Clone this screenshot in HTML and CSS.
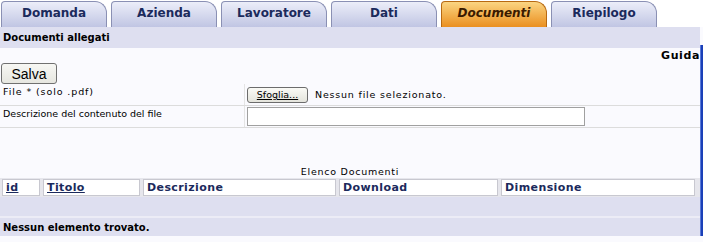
FILE: index.html
```html
<!DOCTYPE html>
<html>
<head>
    <title>Documenti</title>
    <link rel="stylesheet" href="styles.css">
</head>
<body>
<div class="tabs">
    <a class="tab">Domanda</a>
    <a class="tab">Azienda</a>
    <a class="tab">Lavoratore</a>
    <a class="tab">Dati</a>
    <a class="tab tab-active">Documenti</a>
    <a class="tab">Riepilogo</a>
</div>

<div class="page">
    <div class="content">
        <div class="section-title">Documenti allegati</div>

        <div class="guida">Guida</div>

        <button class="btn-salva">Salva</button>

        <div class="form-row">
            <div class="form-label label-file">File * (solo .pdf)</div>
            <div class="form-field">
                <button class="btn-file">Sfoglia...</button>
                <span class="file-name">Nessun file selezionato.</span>
            </div>
        </div>
        <div class="form-row">
            <div class="form-label">Descrizione del contenuto del file</div>
            <div class="form-field">
                <input class="text-input" type="text">
            </div>
        </div>

        <div class="list-caption">Elenco Documenti</div>
        <div class="list-head">
            <div class="head-cell"><a href="#">id</a></div>
            <div class="head-cell"><a href="#">Titolo</a></div>
            <div class="head-cell">Descrizione</div>
            <div class="head-cell">Download</div>
            <div class="head-cell">Dimensione</div>
        </div>
        <div class="list-row row-empty"></div>
        <div class="list-row row-msg">Nessun elemento trovato.</div>
    </div>
    <div class="side-bar"></div>
</div>
</body>
</html>
```

FILE: styles.css
```css
body {
    margin: 0;
    background-color: #fafafe;
    font-family: "DejaVu Sans", Verdana, sans-serif;
    font-size: 10px;
    color: #000000;
}

/* linguette */
.tabs {
    display: flex;
    gap: 4px;
    padding: 1px 0 0 1px;
    height: 27px;
    box-sizing: border-box;
    background-color: #ffffff;
}

.tab {
    width: 106px;
    box-sizing: border-box;
    border: 1px solid #8a90b4;
    border-bottom: none;
    border-radius: 4px 12px 0 0;
    background: linear-gradient(#eceef9, #c0c5e3);
    color: #1b2a5c;
    font-size: 12px;
    font-weight: bold;
    text-align: center;
    line-height: 22px;
}

.tab-active {
    border-color: #b86a12;
    background: linear-gradient(#fbd582, #ea8f20);
    color: #3a1a00;
    font-style: italic;
}

.page {
    display: flex;
}

.content {
    flex: 1;
}

.side-bar {
    width: 2px;
    margin-top: 18px;
    background-color: #1a3fb8;
    border-left: 1px solid #5a7ad8;
}

.section-title {
    height: 21px;
    line-height: 22px;
    padding-left: 3px;
    background-color: #dedff0;
    font-weight: bold;
}

.guida {
    text-align: right;
    font-weight: bold;
    padding: 1px 0 0 0;
    height: 13px;
    font-size: 11px;
    letter-spacing: 0.6px;
}

.btn-salva {
    margin: 1px 0 0 1px;
    height: 21px;
    width: 56px;
    padding: 0;
    font-family: "Liberation Sans", Arial, sans-serif;
    font-size: 14px;
    background: linear-gradient(#f7f7f4, #e6e6e0);
    border: 1px solid #707070;
    border-radius: 3px;
}

.form-row {
    display: flex;
    height: 21px;
    border-bottom: 1px solid #dcdcdc;
}

.form-label {
    width: 241px;
    padding: 2px 0 0 3px;
    border-right: 1px solid #e4e4e4;
    font-size: 9.5px;
}

.label-file {
    letter-spacing: 0.9px;
}

.form-field {
    display: flex;
    align-items: center;
    gap: 7px;
    padding-left: 2px;
}

.btn-file {
    width: 61px;
    height: 16px;
    padding: 0;
    font-family: "DejaVu Sans", Verdana, sans-serif;
    font-size: 9.5px;
    text-decoration: underline;
    background: linear-gradient(#fafaf6, #e4e4dc);
    border: 1px solid #6c6c6c;
    border-radius: 3px;
}

.file-name {
    font-size: 9.5px;
    letter-spacing: 0.8px;
}

.text-input {
    width: 338px;
    height: 19px;
    box-sizing: border-box;
    border: 1px solid #a0a0a0;
    background-color: #ffffff;
}

.list-caption {
    margin-top: 38px;
    text-align: center;
    font-size: 9.5px;
    letter-spacing: 0.75px;
    height: 12px;
}

.list-head {
    display: grid;
    grid-template-columns: 38px 97px 193px 159px 194px;
    gap: 3px;
    padding: 1px 0 1px 2px;
    background-color: #e6e6ec;
}

.head-cell {
    height: 17px;
    box-sizing: border-box;
    padding-left: 3px;
    background-color: #ffffff;
    border: 1px solid #c8c8d0;
    color: #1b2a5c;
    font-size: 11px;
    font-weight: bold;
    letter-spacing: 0.4px;
    line-height: 15px;
}

.head-cell a {
    color: #1b2a5c;
}

.list-row {
    background-color: #dedff0;
}

.row-empty {
    height: 19px;
    border-bottom: 2px solid #ececf6;
}

.row-msg {
    height: 18px;
    line-height: 19px;
    padding-left: 3px;
    font-weight: bold;
}
```
